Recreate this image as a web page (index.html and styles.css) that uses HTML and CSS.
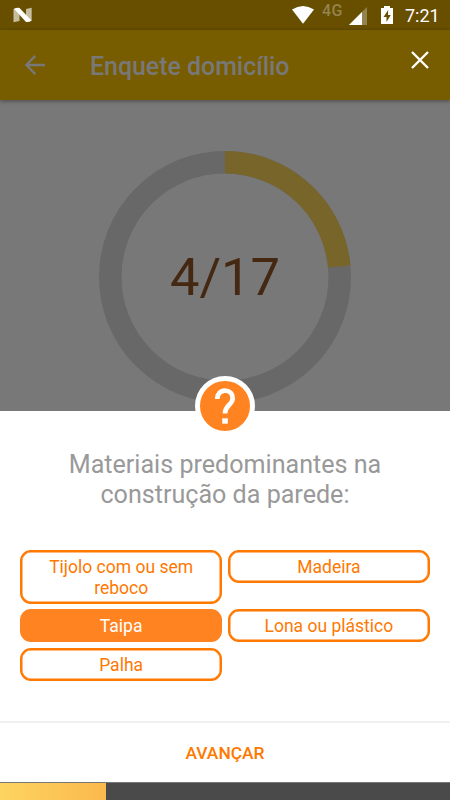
FILE: index.html
```html
<!DOCTYPE html>
<html lang="pt-BR">
<head>
    <title>Enquete domicílio</title>
    <meta charset="utf-8">
    <meta name="viewport" content="width=device-width, initial-scale=1">
    <link rel="stylesheet" href="styles.css">
</head>
<body>
    <div class="status-bar">
        <svg class="icon-n" width="20" height="16" viewBox="0 0 20 16">
            <path d="M0.500 2L6.500 1v13L0.500 15.200z" fill="#c5bd9e"/>
            <path d="M13 2L18.700 0.800v13L13 15z" fill="#c5bd9e"/>
            <path d="M1 1.800Q4 0.500 6.500 1L18.500 13.500Q16 15.500 13 15z" fill="#fff"/>
        </svg>
        <svg class="icon-wifi" width="22" height="18" viewBox="0 0 22 18">
            <path d="M0 3.500Q11-3.500 22 3.500L11 17.700z" fill="#fff"/>
        </svg>
        <span class="network">4G</span>
        <svg class="icon-signal" width="18" height="18" viewBox="0 0 18 18">
            <path d="M0 18L18 0v18z" fill="#93834c"/>
            <path d="M0 18L13 5v13z" fill="#fff"/>
        </svg>
        <svg class="icon-battery" width="12" height="18" viewBox="0 0 12 18">
            <path d="M0 2h3V0h6v2h3v16H0z" fill="#fff"/>
            <path d="M7.200 4L2.500 11h3v5l4.300-7H7z" fill="#684f00"/>
        </svg>
        <span class="clock">7:21</span>
    </div>

    <div class="app-bar">
        <svg class="icon-back" width="20" height="20" viewBox="0 0 20 20">
            <path d="M10.300 0.900L1.400 10l8.900 9.100M1.400 10H20" fill="none" stroke="#787878" stroke-width="2.300"/>
        </svg>
        <h1>Enquete domicílio</h1>
        <svg class="icon-close" width="18" height="18" viewBox="0 0 18 18">
            <path d="M1 1l16 16M17 1L1 17" fill="none" stroke="#fff" stroke-width="2.400"/>
        </svg>
    </div>

    <div class="progress">
        <svg class="ring" width="252" height="252" viewBox="0 0 252 252">
            <circle cx="126" cy="126" r="114.750" fill="none" stroke="#686868" stroke-width="22.500"/>
            <!-- 4 of 17 questions answered -->
            <circle cx="126" cy="126" r="114.750" fill="none" stroke="#77652a" stroke-width="22.500" pathLength="17" stroke-dasharray="4 13" transform="rotate(-90 126 126)"/>
        </svg>
        <span class="count">4/17</span>
    </div>

    <div class="sheet">
        <div class="badge">
            <svg width="22" height="38" viewBox="0 0 22 38">
                <path d="M3.300 12C3.300 7 6.500 3.600 11 3.600S18.700 6.800 18.700 11.200C18.700 18 11 17.800 11 26.500" fill="none" stroke="#fff" stroke-width="4.700"/>
                <path d="M8.200 31.300h5.600v5.400H8.200z" fill="#fff"/>
            </svg>
        </div>
        <h2>Materiais predominantes na construção da parede:</h2>
        <div class="options">
            <div class="option">Tijolo com ou sem reboco</div>
            <div class="option">Madeira</div>
            <div class="option selected">Taipa</div>
            <div class="option">Lona ou plástico</div>
            <div class="option">Palha</div>
        </div>
        <div class="next">AVANÇAR</div>
    </div>

    <div class="bottom-bar">
        <div class="bottom-fill"></div>
    </div>
</body>
</html>
```
FILE: styles.css
```css
* {
    box-sizing: border-box;
}

body {
    display: flex;
    flex-direction: column;
    height: 800px;
    margin: 0;
    overflow: hidden;
    background: #787878;
    font-family: Roboto, sans-serif;
}

svg {
    display: block;
    flex: none;
}

h1, h2 {
    margin: 0;
}

.status-bar {
    display: flex;
    flex: none;
    height: 30px;
    padding: 0 10px 0 13px;
    background: #684f00;
    color: #fff;
}

.icon-n {
    margin-top: 7px;
}

.icon-wifi {
    margin: 6px 0 0 auto;
}

.network {
    width: 27px;
    margin-left: 8px;
    color: #93834c;
    font-size: 16px;
    font-weight: 500;
    line-height: 22px;
    letter-spacing: 0.5px;
}

.icon-signal {
    margin-top: 7px;
}

.icon-battery {
    margin: 6px 0 0 14px;
}

.clock {
    width: 35px;
    margin-left: 12px;
    font-size: 18px;
    line-height: 32px;
    white-space: nowrap;
}

.app-bar {
    display: flex;
    flex: none;
    height: 70px;
    padding: 0 21px 0 25px;
    background: #785c00;
    box-shadow: 0 1px 4px rgba(0, 0, 0, 0.4);
}

.icon-back {
    margin-top: 25px;
}

.app-bar h1 {
    margin-left: 45px;
    color: #787878;
    font-size: 24.9px;
    font-weight: 500;
    line-height: 73px;
}

.icon-close {
    margin: 21px 0 0 auto;
}

.progress {
    display: grid;
    flex: none;
    justify-items: center;
    height: 311px;
    padding-top: 51px;
}

.ring, .count {
    grid-area: 1 / 1;
}

.count {
    color: #452812;
    font-size: 52.5px;
    line-height: 252px;
}

/* Question sheet */
.sheet {
    position: relative;
    display: flex;
    flex: 1;
    flex-direction: column;
    background: #fff;
}

.badge {
    position: absolute;
    top: -35px;
    left: 195px;
    display: flex;
    align-items: center;
    justify-content: center;
    width: 60px;
    height: 60px;
    border: 5px solid #fff;
    border-radius: 50%;
    background: #ff8320;
}

.sheet h2 {
    width: 350px;
    margin: 39px auto 0;
    color: #999;
    font-size: 25.1px;
    font-weight: 400;
    line-height: 30px;
    text-align: center;
}

.options {
    display: grid;
    grid-template-columns: 1fr 1fr;
    gap: 5.5px;
    align-items: start;
    margin: 39.6px 20px 0;
}

.option {
    padding: 5px 20px 3px;
    border: 2px solid #ff7800;
    border-radius: 11px;
    box-shadow: inset 0 0 0 0.5px #ff7800;
    color: #ff7800;
    font-size: 17.5px;
    line-height: 21px;
    text-align: center;
}

.option.selected {
    border-color: #ff8320;
    box-shadow: none;
    background: #ff8320;
    color: #fff;
}

.next {
    height: 61px;
    margin-top: auto;
    border-top: 2px solid #f0f0f0;
    color: #ff7800;
    font-size: 17.4px;
    font-weight: 500;
    line-height: 60px;
    text-align: center;
}

.bottom-bar {
    flex: none;
    height: 18px;
    border-top: 1px solid #777;
    background: #4a4a4a;
}

.bottom-fill {
    width: 106px;
    height: 17px;
    background: linear-gradient(to right, #fdd460, #fbb94d);
}
```
